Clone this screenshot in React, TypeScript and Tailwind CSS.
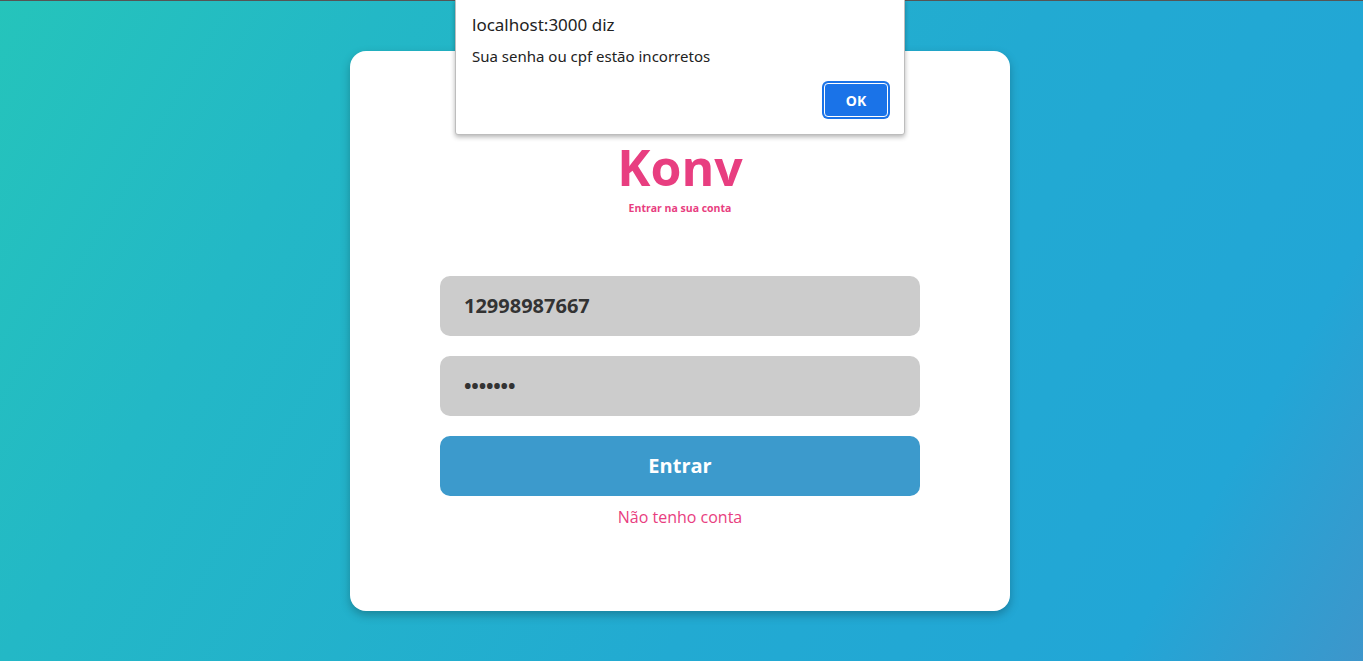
import React from "react";

export default function App() {
  return (
    <div className="relative h-[661px] w-full overflow-hidden bg-[linear-gradient(120deg,#25c4bb_0%,#23b8c6_22%,#22aad2_60%,#22a6d6_86%,#3d96cb_100%)] font-['Open_Sans','Noto_Sans',sans-serif]">
      <div className="h-px w-full bg-[#555]" />
      <div className="flex justify-center pr-[3px] pt-[50px]">
        <div className="flex h-[560px] w-[660px] flex-col items-center rounded-2xl bg-white pt-[88px] shadow-[0_4px_10px_rgba(0,0,0,0.25)]">
          <h1 className="text-[50px] font-bold leading-[56px] text-[#e83e80]">Konv</h1>
          <p className="mt-[6px] text-[10.5px] font-bold leading-[14px] text-[#e83e80]">Entrar na sua conta</p>
          <div className="mt-[61px] flex w-[480px] flex-col gap-5">
            <div className="flex h-[60px] items-center rounded-[10px] bg-[#cccccc] px-6 text-[20px] font-bold text-[#333]">
              12998987667
            </div>
            <div className="flex h-[60px] items-center rounded-[10px] bg-[#cccccc] px-6 text-[20px] font-bold tracking-[-0.2px] text-[#333]">
              •••••••
            </div>
            <button className="flex h-[60px] items-center justify-center rounded-[10px] bg-[#3c9acc] text-[20px] font-bold text-white">
              Entrar
            </button>
          </div>
          <p className="mt-[9px] text-[16px] text-[#e83e80]">Não tenho conta</p>
        </div>
      </div>

      <div className="absolute left-[455px] top-[-1px] h-[136px] w-[450px] rounded-b-[3px] border border-[#bdbdbd] bg-white shadow-[0_2px_5px_rgba(0,0,0,0.3)] font-['Noto_Sans','Open_Sans',sans-serif] text-[#222]">
        <div className="pl-[16px] pt-[13px] text-[17px] leading-[24px]">localhost:3000 diz</div>
        <div className="pl-[16px] pt-[9px] text-[15px] leading-[20px]">Sua senha ou cpf estão incorretos</div>
        <div className="flex justify-end pr-[16px] pt-[17px]">
          <button className="flex h-[34px] w-[64px] items-center justify-center rounded-[4px] border border-white bg-[#1a73e8] text-[14px] font-bold text-white ring-2 ring-[#1a73e8]">
            OK
          </button>
        </div>
      </div>
    </div>
  );
}
